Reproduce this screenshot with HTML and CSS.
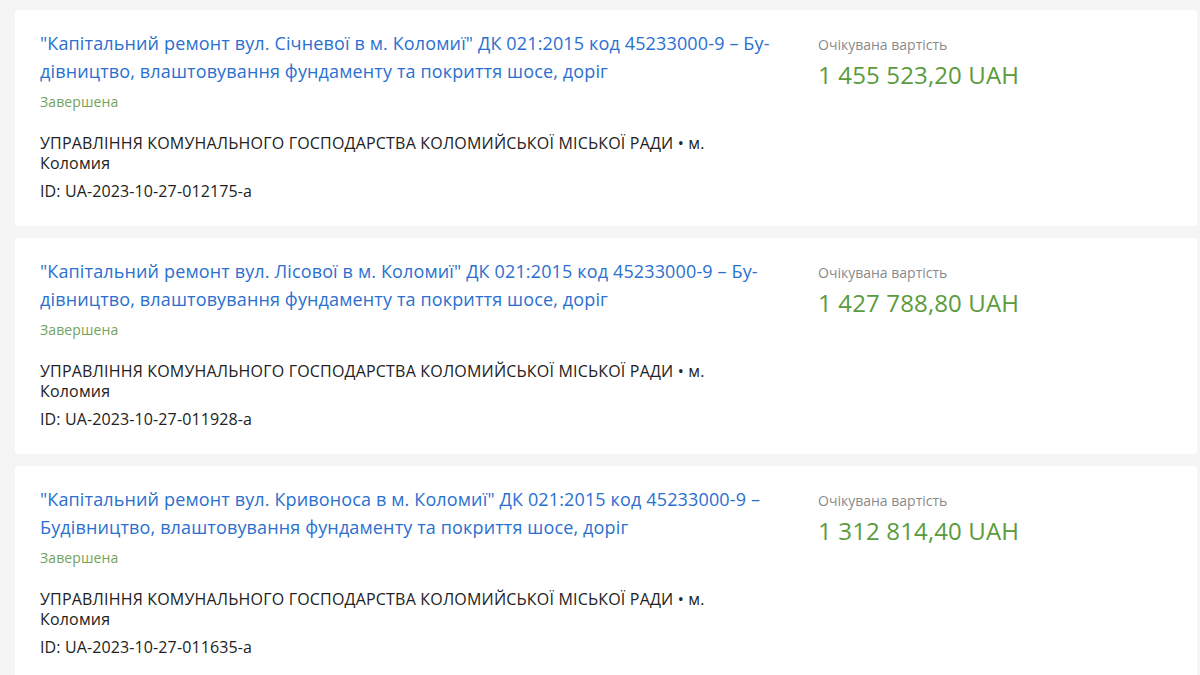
FILE: index.html
```html
<!DOCTYPE html>
<html lang="uk">
<head>
<meta charset="utf-8">
<link rel="stylesheet" href="styles.css">
</head>
<body>
<div class="list">
  <div class="card">
    <div class="main">
      <a class="title" href="#">"Капітальний ремонт вул. Січневої в м. Коломиї" ДК 021:2015 код 45233000-9 – Бу&shy;дівництво, влаштовування фундаменту та покриття шосе, доріг</a>
      <div class="status">Завершена</div>
      <div class="org">УПРАВЛІННЯ КОМУНАЛЬНОГО ГОСПОДАРСТВА КОЛОМИЙСЬКОЇ МІСЬКОЇ РАДИ • м. Коломия</div>
      <div class="id">ID: UA-2023-10-27-012175-a</div>
    </div>
    <div class="side">
      <div class="label">Очікувана вартість</div>
      <div class="price">1 455 523,20 UAH</div>
    </div>
  </div>
  <div class="card">
    <div class="main">
      <a class="title" href="#">"Капітальний ремонт вул. Лісової в м. Коломиї" ДК 021:2015 код 45233000-9 – Бу&shy;дівництво, влаштовування фундаменту та покриття шосе, доріг</a>
      <div class="status">Завершена</div>
      <div class="org">УПРАВЛІННЯ КОМУНАЛЬНОГО ГОСПОДАРСТВА КОЛОМИЙСЬКОЇ МІСЬКОЇ РАДИ • м. Коломия</div>
      <div class="id">ID: UA-2023-10-27-011928-a</div>
    </div>
    <div class="side">
      <div class="label">Очікувана вартість</div>
      <div class="price">1 427 788,80 UAH</div>
    </div>
  </div>
  <div class="card">
    <div class="main">
      <a class="title" href="#">"Капітальний ремонт вул. Кривоноса в м. Коломиї" ДК 021:2015 код 45233000-9 – Бу&shy;дівництво, влаштовування фундаменту та покриття шосе, доріг</a>
      <div class="status">Завершена</div>
      <div class="org">УПРАВЛІННЯ КОМУНАЛЬНОГО ГОСПОДАРСТВА КОЛОМИЙСЬКОЇ МІСЬКОЇ РАДИ • м. Коломия</div>
      <div class="id">ID: UA-2023-10-27-011635-a</div>
    </div>
    <div class="side">
      <div class="label">Очікувана вартість</div>
      <div class="price">1 312 814,40 UAH</div>
    </div>
  </div>
</div>
</body>
</html>
```
FILE: styles.css
```css
html, body {
  margin: 0;
  padding: 0;
  background: #f5f5f5;
  font-family: "Open Sans", "Noto Sans", sans-serif;
  overflow: hidden;
}
.list {
  display: flex;
  flex-direction: column;
  gap: 12px;
  padding: 10px 3px 0 15px;
  border-top: 1px solid #ececec;
  margin-top: -1px;
}
.card {
  background: #fff;
  border-radius: 4px;
  display: flex;
  padding: 20px 25px 25px 25px;
}
.main {
  flex: 0 0 745px;
  display: flex;
  flex-direction: column;
  align-items: flex-start;
}
.title {
  color: #2a70cf;
  font-size: 18px;
  line-height: 28px;
  letter-spacing: 0.14px;
  text-decoration: none;
  hyphens: manual;
  margin-top: -1px;
}
.status {
  margin-top: 7px;
  color: #73a35c;
  font-size: 14px;
  line-height: 20px;
  letter-spacing: 0.1px;
}
.org {
  margin-top: 21px;
  color: #222;
  font-size: 16px;
  line-height: 20px;
  letter-spacing: 0.19px;
  max-width: 720px;
}
.id {
  margin-top: 8px;
  color: #222;
  font-size: 16px;
  line-height: 20px;
  letter-spacing: 0.12px;
}
.side {
  margin-left: 33px;
  padding-top: 5px;
}
.label {
  color: #8a8a8a;
  font-size: 14px;
  line-height: 20px;
}
.price {
  margin-top: 4px;
  color: #5a9b3d;
  font-size: 24px;
  line-height: 32px;
  letter-spacing: 0.15px;
}
```
